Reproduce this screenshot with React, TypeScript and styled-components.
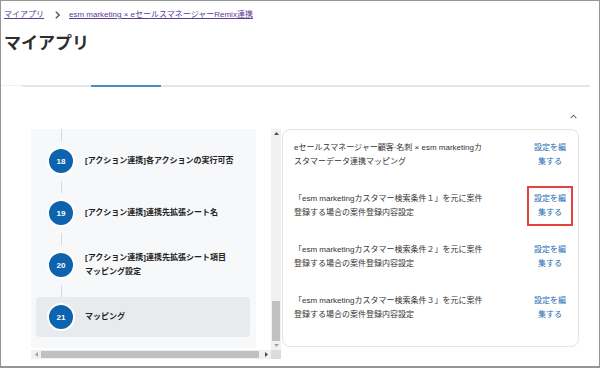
import styled, { createGlobalStyle } from "styled-components";

const GlobalStyle = createGlobalStyle`
  html, body {
    margin: 0;
    padding: 0;
    background: #ffffff;
  }
  body {
    font-family: "Liberation Sans", "Noto Sans CJK JP", sans-serif;
    color: #333333;
  }
`;

type Step = { no: number; lines: string[]; active?: boolean };

const steps: Step[] = [
  { no: 18, lines: ["[アクション連携]各アクションの実行可否"] },
  { no: 19, lines: ["[アクション連携]連携先拡張シート名"] },
  { no: 20, lines: ["[アクション連携]連携先拡張シート項目", "マッピング設定"] },
  { no: 21, lines: ["マッピング"], active: true },
];

type Mapping = { lines: string[]; marked?: boolean };

const mappings: Mapping[] = [
  { lines: ["eセールスマネージャー顧客·名刺 × esm marketingカ", "スタマーデータ連携マッピング"] },
  { lines: ["「esm marketingカスタマー検索条件１」を元に案件", "登録する場合の案件登録内容設定"], marked: true },
  { lines: ["「esm marketingカスタマー検索条件２」を元に案件", "登録する場合の案件登録内容設定"] },
  { lines: ["「esm marketingカスタマー検索条件３」を元に案件", "登録する場合の案件登録内容設定"] },
];

const App = () => {
  return (
    <>
      <GlobalStyle />
      <Frame>
        <Breadcrumb>
          <Crumb>マイアプリ</Crumb>
          <CrumbSep width="5" height="8" viewBox="0 0 5 8">
            <path d="M0.8 0.8 L4.2 4 L0.8 7.2" fill="none" stroke="#555" strokeWidth="1.3" />
          </CrumbSep>
          <Crumb>esm marketing × eセールスマネージャーRemix連携</Crumb>
        </Breadcrumb>
        <Title>マイアプリ</Title>
        <TabRow>
          <TabLead />
          <TabTrack>
            <TabIndicator />
          </TabTrack>
        </TabRow>
        <CollapseRow>
          <svg width="7" height="5" viewBox="0 0 7 5">
            <path d="M0.7 4.2 L3.5 1.2 L6.3 4.2" fill="none" stroke="#666" strokeWidth="1.1" />
          </svg>
        </CollapseRow>
        <Panels>
          <ScrollBox>
            <Viewport>
              <StepPanel>
                {steps.map((s) => (
                  <div key={s.no}>
                    <Connector />
                    <StepRow active={s.active}>
                      <StepBadge>{s.no}</StepBadge>
                      <StepLabel>
                        {s.lines.map((l, i) => (
                          <span key={i}>
                            {l}
                            {i < s.lines.length - 1 && <br />}
                          </span>
                        ))}
                      </StepLabel>
                    </StepRow>
                  </div>
                ))}
              </StepPanel>
            </Viewport>
            <VBar>
              <BarButton>
                <svg width="5" height="3" viewBox="0 0 5 3">
                  <path d="M0 3 L2.5 0 L5 3 Z" fill="#505050" />
                </svg>
              </BarButton>
              <VTrack>
                <VThumb />
              </VTrack>
              <BarButton>
                <svg width="5" height="3" viewBox="0 0 5 3">
                  <path d="M0 0 L2.5 3 L5 0 Z" fill="#a3a3a3" />
                </svg>
              </BarButton>
            </VBar>
            <HBar>
              <BarButton>
                <svg width="3" height="5" viewBox="0 0 3 5">
                  <path d="M3 0 L0 2.5 L3 5 Z" fill="#a3a3a3" />
                </svg>
              </BarButton>
              <HTrack>
                <HThumb />
              </HTrack>
              <BarButton>
                <svg width="3" height="5" viewBox="0 0 3 5">
                  <path d="M0 0 L3 2.5 L0 5 Z" fill="#505050" />
                </svg>
              </BarButton>
            </HBar>
            <BarCorner />
          </ScrollBox>
          <Card>
            {mappings.map((m, idx) => (
              <MappingRow key={idx}>
                <MappingText>
                  {m.lines[0]}
                  <br />
                  {m.lines[1]}
                </MappingText>
                <EditLink marked={m.marked}>
                  設定を編
                  <br />
                  集する
                </EditLink>
              </MappingRow>
            ))}
          </Card>
        </Panels>
      </Frame>
    </>
  );
};

const Frame = styled.div`
  box-sizing: border-box;
  width: 600px;
  height: 368px;
  border: 1px solid #959595;
  border-bottom-width: 2px;
  background: #ffffff;
  overflow: hidden;
  display: flex;
  flex-direction: column;
`;

// breadcrumb
const Breadcrumb = styled.nav`
  display: flex;
  align-items: center;
  height: 12px;
  margin-top: 8px;
  padding-left: 3px;
`;
const Crumb = styled.a`
  font-size: 8px;
  line-height: 12px;
  color: #5c3b94;
  text-decoration: underline;
  white-space: nowrap;
`;
const CrumbSep = styled.svg`
  margin: 0 9px 0 11px;
  flex: none;
`;

const Title = styled.h1`
  margin: 12px 0 0;
  padding-left: 3px;
  font-size: 17px;
  line-height: 22px;
  font-weight: 700;
  color: #2e2e2e;
`;

// tabs
const TabRow = styled.div`
  display: flex;
  align-items: flex-start;
  margin-top: 30px;
  height: 2px;
`;
const TabLead = styled.div`
  width: 21px;
  height: 1px;
  background: #f0f0f0;
`;
const TabTrack = styled.div`
  flex: 1;
  height: 2px;
  margin-right: 9px;
  background: #e3e6ea;
`;
const TabIndicator = styled.div`
  width: 70px;
  height: 2px;
  margin-left: 69px;
  background: #4a8cc9;
`;

const CollapseRow = styled.div`
  display: flex;
  justify-content: flex-end;
  align-items: center;
  height: 10px;
  margin-top: 24px;
  padding-right: 22px;
`;

// panels
const Panels = styled.div`
  display: flex;
  align-items: flex-start;
  margin-top: 8px;
  padding-left: 30px;
`;

const ScrollBox = styled.div`
  display: grid;
  grid-template-columns: 240px 10px;
  grid-template-rows: 221px 9px;
  width: 250px;
`;
const Viewport = styled.div`
  overflow: hidden;
`;
const StepPanel = styled.div`
  width: 225px;
  box-sizing: border-box;
  padding: 0 6px 11px 5px;
  background: #f7f8fa;
  border-radius: 0 0 4px 4px;
`;
const Connector = styled.div`
  width: 1px;
  height: 12px;
  margin-left: 25px;
  background: #d6d9dd;
`;
const StepRow = styled.div<{ active?: boolean }>`
  display: flex;
  align-items: center;
  gap: 10px;
  height: 40px;
  padding-left: 11px;
  border-radius: 4px;
  background: ${({ active }) => (active ? "#e8ebee" : "transparent")};
`;
const StepBadge = styled.div`
  flex: none;
  box-sizing: border-box;
  display: flex;
  align-items: center;
  justify-content: center;
  width: 28px;
  height: 28px;
  border-radius: 50%;
  border: 2px solid #ffffff;
  background: #0d63ad;
  color: #ffffff;
  font-size: 8px;
  font-weight: 700;
`;
const StepLabel = styled.div`
  font-size: 8px;
  line-height: 14px;
  font-weight: 700;
  color: #222222;
  white-space: nowrap;
`;

// fake scrollbars
const VBar = styled.div`
  display: flex;
  flex-direction: column;
  background: #f1f1f1;
`;
const HBar = styled.div`
  display: flex;
  background: #f1f1f1;
`;
const BarButton = styled.div`
  flex: none;
  width: 10px;
  height: 9px;
  display: flex;
  align-items: center;
  justify-content: center;
`;
const VTrack = styled.div`
  flex: 1;
  display: flex;
  flex-direction: column;
  justify-content: flex-end;
  padding: 0 1px;
`;
const VThumb = styled.div`
  height: 40px;
  background: #c1c1c1;
`;
const HTrack = styled.div`
  flex: 1;
  display: flex;
  padding: 1px 0;
`;
const HThumb = styled.div`
  width: 218px;
  background: #c1c1c1;
`;
const BarCorner = styled.div`
  background: #dcdcdc;
`;

// mapping card
const Card = styled.div`
  box-sizing: border-box;
  width: 297px;
  margin-left: 1px;
  padding-bottom: 12px;
  border: 1px solid #e4e4e4;
  border-radius: 8px;
  background: #ffffff;
`;
const MappingRow = styled.div`
  display: flex;
  justify-content: space-between;
  align-items: center;
  padding: 11px 11px 12px 11px;
`;
const MappingText = styled.div`
  font-size: 8px;
  line-height: 14px;
  color: #333333;
  white-space: nowrap;
`;
const EditLink = styled.a<{ marked?: boolean }>`
  width: 34px;
  flex: none;
  font-size: 8px;
  line-height: 14px;
  text-align: center;
  color: #1a6bb5;
  cursor: pointer;
  outline: ${({ marked }) => (marked ? "2px solid #e8423f" : "none")};
  outline-offset: 4px;
`;

export default App;
